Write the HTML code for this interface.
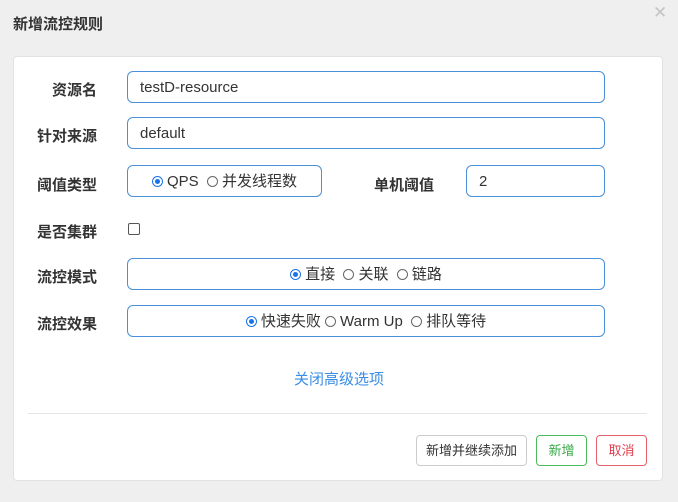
<!DOCTYPE html><html><head><style>
body{margin:0;width:678px;height:502px;background:#efefef;font-family:"Liberation Sans","Noto Sans CJK SC",sans-serif;position:relative;overflow:hidden;color:#333}
.a{position:absolute}
.t{left:13px;top:13px;font-size:15px;font-weight:bold;color:#333}
.x{left:653px;top:3px;font-size:17px;color:#c4c4c4}
.p{left:13px;top:56px;width:648px;height:423px;background:#fff;border:1px solid #e2e2e2;border-radius:4px}
.l{width:84px;text-align:right;left:13px;font-size:15px;font-weight:bold;color:#333}
.i{border:1px solid #4a90d9;border-radius:6px;height:32px;box-sizing:border-box;font-size:15px;line-height:31px;padding-left:12px;color:#333;background:#fff}
.r{display:inline-block;width:11px;height:11px;border:1px solid #666;border-radius:50%;box-sizing:border-box;vertical-align:-1px;margin:0 4px 0 0;position:relative}
.r.on{border-color:#1a73e8}.r.on:after{content:"";position:absolute;left:2px;top:2px;width:5px;height:5px;border-radius:50%;background:#1a73e8}
.c{text-align:center;padding:0}
.b{border:1px solid #ccc;border-radius:4px;height:31px;box-sizing:border-box;line-height:29px;text-align:center;font-size:13px;background:#fff}
</style></head><body>
<div class="a t">新增流控规则</div><div class="a x">✕</div>
<div class="a p"></div>
<div class="a l" style="top:79px">资源名</div>
<div class="a i" style="left:127px;top:71px;width:478px">testD-resource</div>
<div class="a l" style="top:125px">针对来源</div>
<div class="a i" style="left:127px;top:117px;width:478px">default</div>
<div class="a l" style="top:174px">阈值类型</div>
<div class="a i c" style="left:127px;top:165px;width:195px;padding:0"><span class="r on"></span>QPS&nbsp; <span class="r"></span>并发线程数</div>
<div class="a" style="left:374px;top:174px;font-size:15px;font-weight:bold">单机阈值</div>
<div class="a i" style="left:466px;top:165px;width:139px">2</div>
<div class="a l" style="top:221px">是否集群</div>
<div class="a" style="left:128px;top:223px;width:10px;height:10px;border:1px solid #555;border-radius:2px"></div>
<div class="a l" style="top:266px">流控模式</div>
<div class="a i c" style="left:127px;top:258px;width:478px;padding:0"><span class="r on"></span>直接&nbsp; <span class="r"></span>关联&nbsp; <span class="r"></span>链路</div>
<div class="a l" style="top:313px">流控效果</div>
<div class="a i c" style="left:127px;top:305px;width:478px;padding:0"><span class="r on"></span>快速失败 <span class="r"></span>Warm Up&nbsp; <span class="r"></span>排队等待</div>
<div class="a" style="left:0;width:678px;text-align:center;top:368px;font-size:15px;color:#3a8ee6">关闭高级选项</div>
<div class="a" style="left:28px;top:413px;width:619px;height:1px;background:#e5e5e5"></div>
<div class="a b" style="left:416px;top:435px;width:111px">新增并继续添加</div>
<div class="a b" style="left:536px;top:435px;width:51px;border-color:#4cba5c;color:#3aaa4a">新增</div>
<div class="a b" style="left:596px;top:435px;width:51px;border-color:#e5606a;color:#e04050">取消</div>
</body></html>
